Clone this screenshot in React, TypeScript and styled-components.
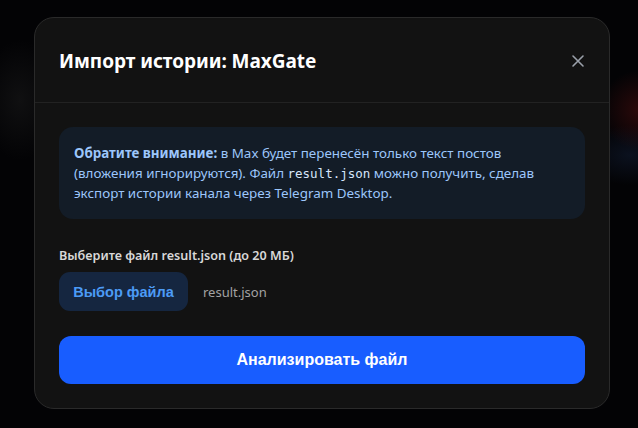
import React from 'react';
import styled, { createGlobalStyle } from 'styled-components';

const GlobalStyle = createGlobalStyle`
  html, body {
    margin: 0;
    padding: 0;
    background: #030305;
  }
  body {
    font-family: "Noto Sans", "Open Sans", sans-serif;
  }
`;

const Backdrop = styled.div`
  width: 638px;
  height: 428px;
  box-sizing: border-box;
  padding-top: 17px;
  padding-left: 34px;
  background:
    radial-gradient(ellipse 40px 40px at 640px 110px, rgba(120, 20, 20, 0.35), transparent),
    radial-gradient(ellipse 50px 30px at 630px 155px, rgba(30, 50, 90, 0.3), transparent),
    radial-gradient(ellipse 40px 60px at 20px 100px, rgba(40, 40, 40, 0.35), transparent),
    #030305;
  overflow: hidden;
`;

const Modal = styled.div`
  width: 576px;
  height: 392px;
  box-sizing: border-box;
  background: #121212;
  border: 1px solid #2a2a2a;
  border-radius: 20px;
  display: flex;
  flex-direction: column;
`;

const Header = styled.div`
  display: flex;
  align-items: center;
  justify-content: space-between;
  height: 85px;
  box-sizing: border-box;
  padding: 2px 24px 0;
  border-bottom: 1px solid #222222;
`;

const Title = styled.h2`
  margin: 0;
  font-size: 19px;
  font-weight: 700;
  color: #ffffff;
  letter-spacing: -0.05px;
`;

const CloseButton = styled.button`
  background: none;
  border: none;
  padding: 0;
  width: 20px;
  height: 20px;
  display: flex;
  align-items: center;
  justify-content: center;
  margin-right: -3px;
  cursor: pointer;
`;

const Body = styled.div`
  padding: 24px;
  display: flex;
  flex-direction: column;
`;

const Notice = styled.div`
  background: #131c27;
  border-radius: 14px;
  padding: 16px 15px;
  font-size: 13.4px;
  line-height: 20px;
  color: #9cc6fb;

  b {
    font-weight: 700;
  }
  code {
    font-family: "DejaVu Sans Mono", "Liberation Mono", monospace;
    font-size: 12.5px;
    line-height: 1;
    color: #d6e6fb;
  }
`;

const Label = styled.div`
  margin-top: 28px;
  font-size: 12.6px;
  font-weight: 600;
  color: #d8d8d8;
`;

const FileRow = styled.div`
  margin-top: 8px;
  display: flex;
  align-items: center;
  gap: 15px;
`;

const PickButton = styled.button`
  width: 129px;
  height: 39px;
  border: none;
  border-radius: 11px;
  background: #152640;
  color: #4c9bf5;
  font-family: "Liberation Sans", Arial, sans-serif;
  font-weight: 700;
  font-size: 14.5px;
  cursor: pointer;
`;

const FileName = styled.span`
  font-size: 13px;
  color: #a3a3a3;
`;

const AnalyzeButton = styled.button`
  margin-top: 25px;
  height: 48px;
  width: 100%;
  border: none;
  border-radius: 12px;
  background: #185dff;
  color: #ffffff;
  font-family: "Liberation Sans", Arial, sans-serif;
  font-weight: 700;
  font-size: 16px;
  cursor: pointer;
`;

export default function App() {
  return (
    <>
      <GlobalStyle />
      <Backdrop>
        <Modal>
          <Header>
            <Title>Импорт истории: MaxGate</Title>
            <CloseButton aria-label="Закрыть">
              <svg width="14" height="14" viewBox="0 0 14 14" fill="none">
                <path d="M2 2L12 12M12 2L2 12" stroke="#9aa0aa" strokeWidth="1.6" strokeLinecap="round" />
              </svg>
            </CloseButton>
          </Header>
          <Body>
            <Notice>
              <b>Обратите внимание:</b> в Max будет перенесён только текст постов (вложения
              игнорируются). Файл <code>result.json</code> можно получить, сделав экспорт истории
              канала через Telegram Desktop.
            </Notice>
            <Label>Выберите файл result.json (до 20 МБ)</Label>
            <FileRow>
              <PickButton>Выбор файла</PickButton>
              <FileName>result.json</FileName>
            </FileRow>
            <AnalyzeButton>Анализировать файл</AnalyzeButton>
          </Body>
        </Modal>
      </Backdrop>
    </>
  );
}
